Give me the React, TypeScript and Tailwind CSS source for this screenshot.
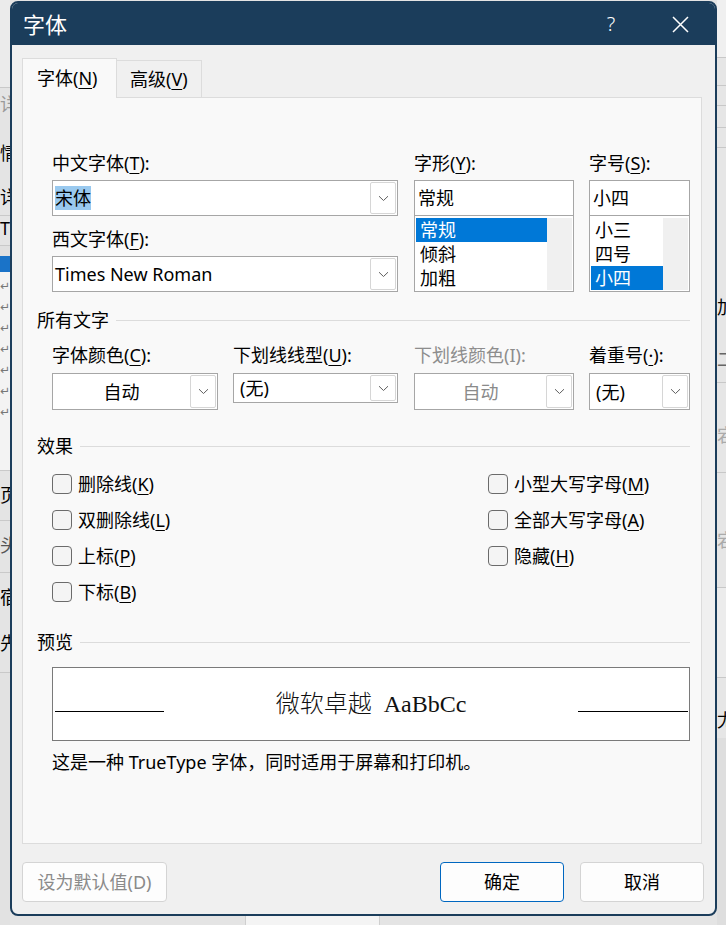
import React from "react";

const ui = "font-['Noto_Sans','Noto_Sans_CJK_SC',sans-serif]";

function Mn({ children }: { children: React.ReactNode }) {
  return <span className="underline decoration-1 underline-offset-[3px]">{children}</span>;
}

function Chevron({ color = "#5f5f5f" }: { color?: string }) {
  return (
    <svg width="11" height="7" viewBox="0 0 11 7" fill="none">
      <path d="M1 1.2 L5.5 5.5 L10 1.2" stroke={color} strokeWidth="1" />
    </svg>
  );
}

function DropBtn() {
  return (
    <div className="my-[1px] mr-[1px] flex w-[26px] items-center justify-center rounded-[2px] border border-[#d6d6d6] bg-white">
      <Chevron />
    </div>
  );
}

function Label({ children, disabled }: { children: React.ReactNode; disabled?: boolean }) {
  return (
    <div className={`h-[20px] whitespace-nowrap text-[18px] leading-[20px] ${disabled ? "text-[#8d8d8d]" : "text-black"}`}>
      {children}
    </div>
  );
}

function Combo({
  value,
  center,
  disabled,
  highlight,
  tight,
  className,
}: {
  value: string;
  center?: boolean;
  disabled?: boolean;
  highlight?: boolean;
  tight?: boolean;
  className: string;
}) {
  return (
    <div className={`flex border border-[#a6a6a6] bg-white ${className}`}>
      <div className={`flex flex-1 items-center ${center ? "justify-center" : tight ? "pl-[2px]" : "pl-[6px]"}`}>
        <span
          className={`text-[18px] leading-[24px] ${disabled ? "text-[#8a8a8a]" : "text-black"} ${
            highlight ? "bg-[#99c9ef]" : ""
          }`}
        >
          {value}
        </span>
      </div>
      <DropBtn />
    </div>
  );
}

function TextBox({ value }: { value: string }) {
  return (
    <div className="flex h-[36px] items-center border border-[#a6a6a6] bg-white pl-[3px] text-[18px] leading-[24px]">
      {value}
    </div>
  );
}

function ListBox({ items, selected }: { items: string[]; selected: string }) {
  return (
    <div className="flex h-[76px] border border-t-0 border-[#a6a6a6] bg-white">
      <div className="flex-1 pl-[1px] pt-[2px]">
        {items.map((it) => (
          <div
            key={it}
            className={`h-[24px] pl-[4px] text-[18px] leading-[24px] ${
              it === selected ? "bg-[#0078d7] text-white" : "text-black"
            }`}
          >
            {it}
          </div>
        ))}
      </div>
      <div className="my-[1px] mr-[1px] mt-[2px] w-[25px] bg-[#f0f0f0]" />
    </div>
  );
}

function Section({ title, className }: { title: string; className: string }) {
  return (
    <div className={`-ml-[15px] flex h-[24px] items-center ${className}`}>
      <span className="text-[18px] leading-[24px]">{title}</span>
      <div className="ml-[7px] h-px flex-1 bg-[#dcdcdc]" />
    </div>
  );
}

function Check({ children }: { children: React.ReactNode }) {
  return (
    <div className="flex h-[36px] items-center">
      <div className="h-[20px] w-[20px] rounded-[4px] border border-[#6b6b6b] bg-[#f4f4f4]" />
      <span className="ml-[6px] whitespace-nowrap text-[18px] leading-[24px]">{children}</span>
    </div>
  );
}

function Btn({ children, w, primary, disabled }: { children: React.ReactNode; w: string; primary?: boolean; disabled?: boolean }) {
  return (
    <div
      className={`flex h-[40px] items-center justify-center rounded-[4px] border bg-[#fdfdfd] text-[18px] leading-[24px] ${w} ${
        primary ? "border-[#0067c0]" : "border-[#d4d4d4]"
      } ${disabled ? "text-[#8a8a8a]" : "text-black"}`}
    >
      {children}
    </div>
  );
}

// the Word document peeking out behind the dialog, left edge
function LeftStrip() {
  const arrows = [0, 1, 2, 3, 4, 5, 6];
  return (
    <div className="flex w-[10px] flex-col overflow-hidden bg-[#e4e4e4] text-[18px] leading-[24px]">
      <div className="h-[88px] border-b border-[#c9c9c9] bg-[#ebebeb]" />
      <div className="h-[36px] pt-[4px] text-[#9a9a9a]">详</div>
      <div className="h-[52px] pt-[17px]">情</div>
      <div className="h-[40px] border-b border-[#c9c9c9] pt-[9px]">详</div>
      <div className="h-[30px] border-b border-[#c9c9c9]">TC</div>
      <div className="h-[10px] bg-[#e0e0e0]" />
      <div className="h-[16px] bg-[#1a73c8]" />
      <div className="flex flex-col bg-[#f3f3f3] pt-[4px]">
        {arrows.map((a) => (
          <div key={a} className="h-[21px] font-['DejaVu_Sans',sans-serif] text-[12px] leading-[21px] text-[#777]">
            ↵
          </div>
        ))}
      </div>
      <div className="h-[48px] border-b border-[#c9c9c9] bg-[#f3f3f3]" />
      <div className="h-[50px] border-b border-[#c9c9c9] pt-[12px]">页</div>
      <div className="h-[52px] border-b border-[#c9c9c9] pt-[12px] text-[#555]">头</div>
      <div className="h-[50px] pt-[12px]">宿</div>
      <div className="h-[50px] border-b border-[#c9c9c9] pt-[8px]">先</div>
      <div className="flex-1 bg-[#e2e2e2]" />
    </div>
  );
}

// right edge of the document behind
function RightStrip() {
  return (
    <div className="flex w-[9px] flex-col overflow-hidden bg-[#e6e6e6] text-[18px] leading-[24px]">
      <div className="h-[58px] border-b border-[#c8c8c8] bg-[#f0f0f0]" />
      <div className="h-[28px] border-b border-[#c8c8c8]" />
      <div className="h-[20px] border-b border-[#c8c8c8]" />
      <div className="h-[22px] border-b border-[#c8c8c8]" />
      <div className="h-[20px] border-b border-[#c8c8c8]" />
      <div className="h-[175px] pt-[147px]">加</div>
      <div className="h-[60px] border-b border-[#c8c8c8] pt-[24px] text-[#666]">二</div>
      <div className="h-[90px] border-b border-[#c8c8c8] pt-[40px] text-[#aaa]">宕</div>
      <div className="h-[115px] border-b border-[#c8c8c8] pt-[55px] text-[#aaa]">宕</div>
      <div className="h-[90px] border-b border-[#c8c8c8] bg-[#ececec]" />
      <div className="h-[60px] pt-[30px]">尤</div>
      <div className="flex-1 bg-[#dedede]" />
    </div>
  );
}

export default function App() {
  return (
    <div className={`flex h-[925px] w-[726px] overflow-hidden bg-[#e4e4e4] text-black ${ui}`}>
      <LeftStrip />
      <div className="flex w-[707px] flex-col">
        <div className="h-[1px]" />
        <div className="flex h-[915px] flex-col overflow-hidden rounded-[8px] border-2 border-[#1b3d5b] bg-[#f0f0f0]">
          {/* title bar */}
          <div className="flex h-[42px] items-center bg-[#1b3d5b] text-white">
            <span className="pl-[11px] text-[22px] leading-[28px]">字体</span>
            <div className="flex-1" />
            <div className="flex w-[46px] justify-center text-[20px] font-light leading-[24px]">?</div>
            <div className="ml-[23px] mr-[12px] flex w-[46px] justify-center">
              <svg width="17" height="17" viewBox="0 0 17 17">
                <path d="M1 1 L16 16 M16 1 L1 16" stroke="white" strokeWidth="1.5" />
              </svg>
            </div>
          </div>

          {/* tabs */}
          <div className="flex items-end pl-[10px] pt-[13px]">
            <div className="relative z-10 -mb-px flex h-[40px] w-[95px] items-center border border-b-0 border-[#dcdcdc] bg-[#f9f9f9] pb-[1px] pl-[14px] text-[18px] leading-[24px]">
              字体(<Mn>N</Mn>)
            </div>
            <div className="flex h-[37px] w-[85px] items-center border border-b-0 border-l-0 border-[#dcdcdc] bg-[#f0f0f0] pl-[13px] text-[18px] leading-[24px]">
              高级(<Mn>V</Mn>)
            </div>
          </div>

          {/* panel */}
          <div className="ml-[10px] h-[747px] w-[680px] border border-[#dcdcdc] bg-[#f9f9f9] pl-[29px] pr-[11px]">
            <div className="flex pt-[55px]">
              <div className="w-[346px]">
                <Label>
                  中文字体(<Mn>T</Mn>):
                </Label>
                <Combo value="宋体" highlight tight className="mt-[7px] h-[36px]" />
                <div className="mt-[13px]">
                  <Label>
                    西文字体(<Mn>F</Mn>):
                  </Label>
                </div>
                <Combo value="Times New Roman" tight className="mt-[7px] h-[36px]" />
              </div>
              <div className="ml-[16px] w-[160px]">
                <Label>
                  字形(<Mn>Y</Mn>):
                </Label>
                <div className="mt-[7px]">
                  <TextBox value="常规" />
                  <ListBox items={["常规", "倾斜", "加粗"]} selected="常规" />
                </div>
              </div>
              <div className="ml-[15px] w-[101px]">
                <Label>
                  字号(<Mn>S</Mn>):
                </Label>
                <div className="mt-[7px]">
                  <TextBox value="小四" />
                  <ListBox items={["小三", "四号", "小四"]} selected="小四" />
                </div>
              </div>
            </div>

            <Section title="所有文字" className="mt-[16px]" />

            <div className="mt-[13px] flex items-start">
              <div className="w-[166px]">
                <Label>
                  字体颜色(<Mn>C</Mn>):
                </Label>
                <Combo value="自动" center className="mt-[8px] h-[37px]" />
              </div>
              <div className="ml-[15px] w-[165px]">
                <Label>
                  下划线线型(<Mn>U</Mn>):
                </Label>
                <Combo value="(无)" className="mt-[8px] h-[30px]" />
              </div>
              <div className="ml-[16px] w-[160px]">
                <Label disabled>下划线颜色(I):</Label>
                <Combo value="自动" center disabled className="mt-[8px] h-[37px]" />
              </div>
              <div className="ml-[15px] w-[101px]">
                <Label>
                  着重号(<Mn>·</Mn>):
                </Label>
                <Combo value="(无)" className="mt-[8px] h-[37px]" />
              </div>
            </div>

            <Section title="效果" className="mt-[24px]" />

            <div className="mt-[8px] flex">
              <div className="w-[436px]">
                <Check>
                  删除线(<Mn>K</Mn>)
                </Check>
                <Check>
                  双删除线(<Mn>L</Mn>)
                </Check>
                <Check>
                  上标(<Mn>P</Mn>)
                </Check>
                <Check>
                  下标(<Mn>B</Mn>)
                </Check>
              </div>
              <div>
                <Check>
                  小型大写字母(<Mn>M</Mn>)
                </Check>
                <Check>
                  全部大写字母(<Mn>A</Mn>)
                </Check>
                <Check>
                  隐藏(<Mn>H</Mn>)
                </Check>
              </div>
            </div>

            <Section title="预览" className="mt-[20px]" />

            <div className="mt-[13px] h-[74px] border border-[#7a7a7a] bg-white">
              <div className="flex items-baseline pt-[21px]">
                <div className="ml-[2px] h-[1.5px] w-[109px] bg-black" />
                <div className="flex-1 whitespace-pre text-center font-['Liberation_Serif','Noto_Sans_CJK_SC',serif] text-[24px] font-light leading-[30px] text-[#111]">
                  微软卓越  AaBbCc
                </div>
                <div className="mr-[1px] h-[1.5px] w-[110px] bg-black" />
              </div>
            </div>

            <div className="mt-[9px] h-[24px] whitespace-nowrap text-[18px] leading-[24px]">
              这是一种 TrueType 字体，同时适用于屏幕和打印机。
            </div>
          </div>

          {/* buttons */}
          <div className="mt-[18px] flex pl-[10px] pr-[11px]">
            <Btn w="w-[145px]" disabled>
              设为默认值(D)
            </Btn>
            <div className="flex-1" />
            <Btn w="w-[124px]" primary>
              确定
            </Btn>
            <div className="w-[16px]" />
            <Btn w="w-[124px]">取消</Btn>
          </div>
        </div>
        <div className="flex h-[9px]">
          <div className="ml-[235px] w-[135px] border-x border-[#cfcfcf] bg-[#f4f4f4]" />
        </div>
      </div>
      <RightStrip />
    </div>
  );
}
